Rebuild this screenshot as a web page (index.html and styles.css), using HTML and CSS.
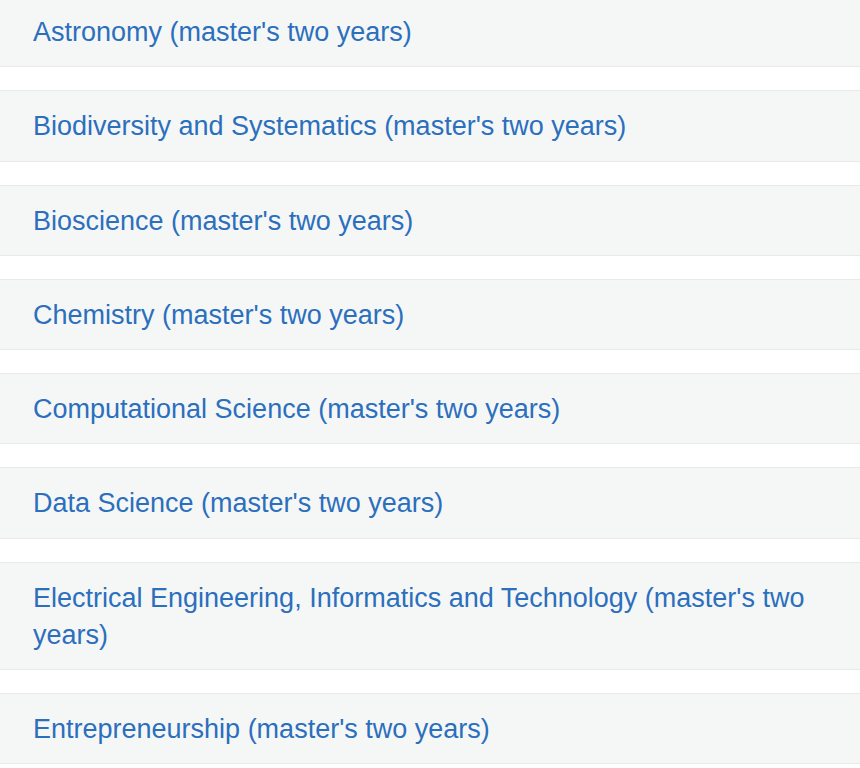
FILE: index.html
```html
<!DOCTYPE html>
<html>
<head>
<meta charset="utf-8">
<link rel="stylesheet" href="styles.css">
</head>
<body>
<ul class="programs">
  <li class="program"><a href="#">Astronomy (master's two years)</a></li>
  <li class="program"><a href="#">Biodiversity and Systematics (master's two years)</a></li>
  <li class="program"><a href="#">Bioscience (master's two years)</a></li>
  <li class="program"><a href="#">Chemistry (master's two years)</a></li>
  <li class="program"><a href="#">Computational Science (master's two years)</a></li>
  <li class="program"><a href="#">Data Science (master's two years)</a></li>
  <li class="program"><a href="#">Electrical Engineering, Informatics and Technology (master's two years)</a></li>
  <li class="program"><a href="#">Entrepreneurship (master's two years)</a></li>
</ul>
</body>
</html>
```
FILE: styles.css
```css
html, body {
  margin: 0;
  padding: 0;
  background: #ffffff;
}
.programs {
  list-style: none;
  margin: -4px 0 0 0;
  padding: 0;
  display: flex;
  flex-direction: column;
  gap: 23px;
}
.program {
  background: #f5f7f7;
  border-top: 1px solid #e8e9e9;
  border-bottom: 1px solid #e8e9e9;
  padding: 17px 40px 15.3px 33px;
  font-family: "Liberation Sans", Arial, sans-serif;
  font-size: 27px;
  line-height: 37px;
}
.program a {
  color: #2b6fbd;
  text-decoration: none;
}
```
